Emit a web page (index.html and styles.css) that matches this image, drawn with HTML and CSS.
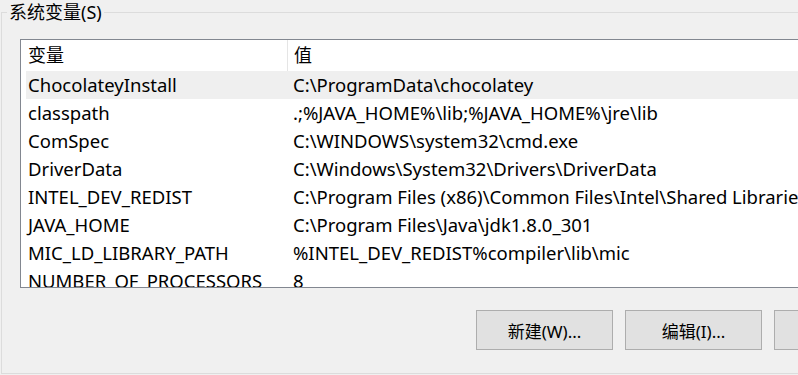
FILE: index.html
```html
<!DOCTYPE html>
<html lang="zh-CN">
<head>
    <meta charset="UTF-8">
    <title>系统变量</title>
    <link rel="stylesheet" href="styles.css">
</head>
<body>

<fieldset class="group">
    <legend>系统变量(S)</legend>

    <div class="var-list">
        <div class="list-head">
            <div class="col-name">变量</div>
            <div class="col-value">值</div>
        </div>
        <div class="list-row hot"><div class="col-name">ChocolateyInstall</div><div class="col-value">C:\ProgramData\chocolatey</div></div>
        <div class="list-row"><div class="col-name">classpath</div><div class="col-value">.;%JAVA_HOME%\lib;%JAVA_HOME%\jre\lib</div></div>
        <div class="list-row"><div class="col-name">ComSpec</div><div class="col-value">C:\WINDOWS\system32\cmd.exe</div></div>
        <div class="list-row"><div class="col-name">DriverData</div><div class="col-value">C:\Windows\System32\Drivers\DriverData</div></div>
        <div class="list-row"><div class="col-name">INTEL_DEV_REDIST</div><div class="col-value">C:\Program Files (x86)\Common Files\Intel\Shared Libraries\</div></div>
        <div class="list-row"><div class="col-name">JAVA_HOME</div><div class="col-value">C:\Program Files\Java\jdk1.8.0_301</div></div>
        <div class="list-row"><div class="col-name">MIC_LD_LIBRARY_PATH</div><div class="col-value">%INTEL_DEV_REDIST%compiler\lib\mic</div></div>
        <div class="list-row"><div class="col-name">NUMBER_OF_PROCESSORS</div><div class="col-value">8</div></div>
    </div>

    <div class="actions">
        <button>新建(W)...</button>
        <button>编辑(I)...</button>
        <button>删除(L)</button>
    </div>
</fieldset>

</body>
</html>
```

FILE: styles.css
```css
html, body {
    margin: 0;
    padding: 0;
    overflow: hidden;
}

body {
    width: 798px;
    height: 375px;
    background-color: #f0f0f0;
    font-family: 'Noto Sans', 'Noto Sans CJK SC', sans-serif;
    font-size: 18px;
    color: #000;
}

.group {
    margin: 0 0 0 1px;
    padding: 0 0 0 18px;
    border: 1px solid #dcdcdc;
    border-right: none;
    width: 1000px;
    height: 372px;
}

.group legend {
    margin-left: -13px;
    padding: 0 2px;
    line-height: 24px;
}

.var-list {
    margin-top: 15px;
    border: 1px solid #828790;
    border-right: none;
    height: 247px;
    width: 1000px;
    padding-left: 5px;
    background-color: #fff;
    font-size: 18.5px;
    overflow: hidden;
}

.list-head, .list-row {
    display: flex;
    white-space: nowrap;
}

.list-head {
    height: 31px;
    line-height: 31px;
    font-size: 18px;
}

.list-row {
    height: 28px;
    line-height: 28px;
}

.list-row.hot {
    background-color: #efefef;
}

.col-name {
    width: 259px;
    padding-left: 2px;
    flex-shrink: 0;
}

.col-value {
    padding-left: 6px;
}

.list-head .col-value {
    border-left: 1px solid #e5e5e5;
    padding-left: 6px;
}

.actions {
    display: flex;
    gap: 12px;
    margin: 22px 0 0 456px;
}

.actions button {
    width: 137px;
    height: 40px;
    flex-shrink: 0;
    background-color: #e1e1e1;
    border: 1px solid #adadad;
    font-family: inherit;
    font-size: 17px;
    color: #000;
}
```
